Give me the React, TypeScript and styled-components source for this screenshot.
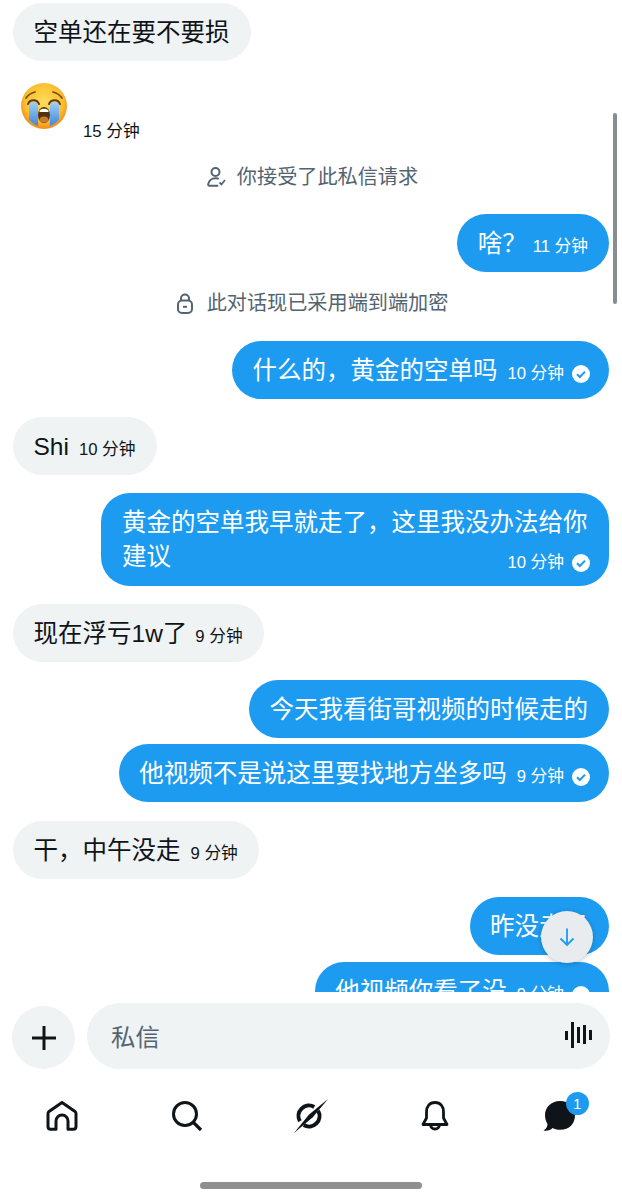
import React from 'react';
import styled, { createGlobalStyle } from 'styled-components';

const GlobalStyle = createGlobalStyle`
  html, body {
    margin: 0;
    padding: 0;
    background: #fff;
  }
  body {
    font-family: "Liberation Sans", "Noto Sans CJK SC", sans-serif;
    color: #0f1419;
  }
`;

const Page = styled.div`
  position: relative;
  width: 622px;
  height: 1200px;
  overflow: hidden;
  display: flex;
  flex-direction: column;
  background: #fff;
`;

const Thread = styled.div`
  height: 992px;
  flex: none;
  overflow: hidden;
  box-sizing: border-box;
  padding: 3px 13px 0;
  display: flex;
  flex-direction: column;
`;

const Row = styled.div<{ $mine?: boolean; $gap?: number }>`
  display: flex;
  flex: none;
  justify-content: ${(p) => (p.$mine ? 'flex-end' : 'flex-start')};
  margin-top: ${(p) => p.$gap ?? 18}px;
`;

const Bubble = styled.div<{ $mine?: boolean; $wrap?: boolean }>`
  display: ${(p) => (p.$wrap ? 'block' : 'flex')};
  align-items: baseline;
  box-sizing: border-box;
  height: ${(p) => (p.$wrap ? '93px' : '58px')};
  width: ${(p) => (p.$wrap ? '508px' : 'auto')};
  padding: ${(p) => (p.$wrap ? '13px 21px 12px 21px' : '2px 21px 0 20.5px')};
  line-height: ${(p) => (p.$wrap ? '34px' : '56px')};
  border-radius: 29px;
  font-size: 24.5px;
  background: ${(p) => (p.$mine ? '#1d9bf0' : '#eff3f4')};
  color: ${(p) => (p.$mine ? '#fff' : '#0f1419')};
`;

const Meta = styled.span<{ $float?: boolean; $gap?: number }>`
  display: inline-flex;
  align-items: center;
  gap: 8px;
  margin-left: ${(p) => p.$gap ?? 10}px;
  font-size: 16.7px;
  line-height: 20px;
  white-space: nowrap;
  ${(p) => (p.$float ? 'float: right; margin-top: 13px;' : '')}
`;

const CheckMark = styled.svg`
  width: 18px;
  height: 18px;
  flex: none;
  margin-right: -2px;
`;

const EmojiRow = styled.div`
  display: flex;
  flex: none;
  align-items: flex-end;
  gap: 16px;
  height: 59px;
  margin-top: 22px;
  padding-left: 8px;
`;

const EmojiFace = styled.svg`
  width: 46px;
  height: 46px;
  margin-bottom: 13px;
`;

const EmojiTime = styled.span`
  font-size: 16.7px;
  line-height: 20px;
`;

const SystemNote = styled.div<{ $gap: number; $after: number; $iconGap: number }>`
  display: flex;
  flex: none;
  align-items: center;
  justify-content: center;
  gap: ${(p) => p.$iconGap}px;
  box-sizing: border-box;
  height: 30px;
  padding: 2px 0 0 3px;
  margin-top: ${(p) => p.$gap}px;
  margin-bottom: ${(p) => p.$after}px;
  font-size: 20.15px;
  line-height: 28px;
  color: #536471;
`;

const Composer = styled.div`
  display: flex;
  align-items: flex-end;
  gap: 12px;
  height: 66px;
  padding: 11px 12px 0;
  flex: none;
`;

const PlusButton = styled.div`
  width: 63px;
  height: 63px;
  flex: none;
  border-radius: 50%;
  background: #eff3f4;
  display: flex;
  align-items: center;
  justify-content: center;
`;

const InputPill = styled.div`
  flex: 1;
  height: 66px;
  box-sizing: border-box;
  padding: 0 18px 2px 24px;
  border-radius: 33px;
  background: #eff3f4;
  display: flex;
  align-items: center;
  justify-content: space-between;
  font-size: 24.4px;
  color: #536471;
`;

const BottomNav = styled.nav`
  display: grid;
  grid-template-columns: repeat(5, 1fr);
  height: 94px;
  flex: none;
`;

const NavItem = styled.div`
  position: relative;
  display: flex;
  align-items: center;
  justify-content: center;
`;

const Badge = styled.span`
  position: absolute;
  left: 68px;
  top: 23px;
  width: 23px;
  height: 23px;
  border-radius: 50%;
  background: #1d9bf0;
  color: #fff;
  font-size: 15px;
  line-height: 23px;
  text-align: center;
`;

const HomeBar = styled.div`
  width: 222px;
  height: 7px;
  margin: 19px auto 0;
  border-radius: 4px;
  background: #8f8f8f;
  flex: none;
`;

const ScrollThumb = styled.div`
  position: absolute;
  left: 613px;
  top: 113px;
  width: 4px;
  height: 191px;
  border-radius: 2px;
  background: #8a8d90;
`;

const JumpButton = styled.div`
  position: absolute;
  left: 541px;
  top: 911px;
  width: 52px;
  height: 52px;
  border-radius: 50%;
  background: #e8ecee;
  box-shadow: 0 1px 5px rgba(15, 20, 25, 0.25);
  display: flex;
  align-items: center;
  justify-content: center;
`;

const Check = () => (
  <CheckMark viewBox="0 0 18 18">
    <circle cx="9" cy="9" r="9" fill="#fff" />
    <path d="M5 9.3l2.8 2.7L13 6.6" fill="none" stroke="#1d9bf0" strokeWidth="2" />
  </CheckMark>
);

const CryingFace = () => (
  <EmojiFace viewBox="0 0 46 46">
    <defs>
      <radialGradient id="faceFill" cx="50%" cy="42%" r="58%">
        <stop offset="0%" stopColor="#ffdc5c" />
        <stop offset="70%" stopColor="#fbc02f" />
        <stop offset="100%" stopColor="#f08a1a" />
      </radialGradient>
      <linearGradient id="tearFill" x1="0" y1="0" x2="0" y2="1">
        <stop offset="0%" stopColor="#9fd0f2" />
        <stop offset="100%" stopColor="#3f86dc" />
      </linearGradient>
    </defs>
    <circle cx="23" cy="23" r="23" fill="url(#faceFill)" />
    <path d="M8 22c1-4 8-4 9 0v21c-3-1-6-3-9-6z" fill="url(#tearFill)" />
    <path d="M29 22c1-4 8-4 9 0v15c-3 3-6 5-9 6z" fill="url(#tearFill)" />
    <path d="M7 21c2-5 9-5 11 0" fill="none" stroke="#5a3a12" strokeWidth="2" strokeLinecap="round" />
    <path d="M28 21c2-5 9-5 11 0" fill="none" stroke="#5a3a12" strokeWidth="2" strokeLinecap="round" />
    <path d="M5 15c2-3 5-5 9-6" fill="none" stroke="#7a4f14" strokeWidth="1.8" strokeLinecap="round" />
    <path d="M41 15c-2-3-5-5-9-6" fill="none" stroke="#7a4f14" strokeWidth="1.8" strokeLinecap="round" />
    <ellipse cx="23" cy="32" rx="6" ry="8" fill="#55320f" />
    <path d="M18.500 27.500c2-2.500 7-2.500 9 0v1.500h-9z" fill="#fff" />
    <ellipse cx="23" cy="36.500" rx="4.200" ry="3" fill="#c77b2e" />
  </EmojiFace>
);

const PersonCheckIcon = () => (
  <svg width="19" height="20" viewBox="0 0 19 20" fill="none" stroke="#536471" strokeWidth="2">
    <circle cx="8.500" cy="5" r="4" />
    <path d="M11 11.500c-.8-.2-1.600-.3-2.500-.3-4 0-6.800 2.600-7.300 6-.1.900.4 1.500 1.300 1.500h8" strokeLinecap="round" />
    <path d="M12.500 15.500l2 2 3.500-4.500" strokeWidth="1.800" />
  </svg>
);

const LockIcon = () => (
  <svg width="16" height="21" viewBox="0 0 16 21" fill="none" stroke="#536471" strokeWidth="2">
    <path d="M4 8V5.500a4 4 0 0 1 8 0V8" />
    <rect x="1" y="7.500" width="14" height="12.500" rx="4" />
    <path d="M6 13.800h4" />
  </svg>
);

const WaveIcon = () => (
  <svg width="27" height="26" viewBox="0 0 27 26" fill="#0f1419">
    <rect x="0" y="9" width="3" height="9" />
    <rect x="6" y="0" width="3" height="26" />
    <rect x="12" y="5" width="3" height="16" />
    <rect x="18" y="3" width="3" height="19" />
    <rect x="24" y="8" width="3" height="10" />
  </svg>
);

const icon = { fill: 'none', stroke: '#0f1419', strokeWidth: 3 };

const HomeIcon = () => (
  <svg width="32" height="32" viewBox="0 0 32 32" {...icon} strokeLinejoin="round">
    <path d="M16 2.500L29 11.500c.7.500 1 1.200 1 2v13c0 1.700-1 2.700-2.700 2.700H22V21a6 6 0 0 0-12 0v8.200H4.700C3 29.200 2 28.200 2 26.500v-13c0-.8.300-1.500 1-2z" />
  </svg>
);

const SearchIcon = () => (
  <svg width="32" height="32" viewBox="0 0 32 32" {...icon}>
    <circle cx="14" cy="14" r="11.500" />
    <path d="M22.500 22.500L30 30" strokeWidth="3.200" />
  </svg>
);

const GrokIcon = () => (
  <svg width="38" height="38" viewBox="0 0 38 38" fill="none">
    <path d="M22.250 9.900A10.500 10.500 0 0 0 7.900 24.250" stroke="#0f1419" strokeWidth="4" />
    <path d="M11.750 28.090A10.500 10.500 0 0 0 26.090 13.750" stroke="#0f1419" strokeWidth="4" />
    <path d="M36 2L20.800 20.300 2 36 16.800 17.800z" fill="#0f1419" />
  </svg>
);

const BellIcon = () => (
  <svg width="30" height="32" viewBox="0 0 30 32" {...icon} strokeLinejoin="round">
    <path d="M15 2.500c-5.500 0-8.500 4-8.500 9.500v6L3 24.500h24L23.500 18v-6c0-5.500-3-9.500-8.500-9.500z" strokeWidth="2.800" />
    <path d="M10.500 24.500c0 2.700 2 4.500 4.500 4.500s4.500-1.800 4.500-4.500" strokeWidth="2.800" />
  </svg>
);

const ChatIcon = () => (
  <svg width="34" height="32" viewBox="0 0 34 32" fill="#0f1419">
    <path d="M17 1C8 1 2 7.500 2 15c0 3.500 1 6.500 2.500 9C4.500 26.500 3 29 .5 30.500c3.500.8 7-.2 9-2.500 2 1 4.500 1.800 7.500 1.800 9.500 0 15-6 15-14.500C32 7 26 1 17 1z" />
  </svg>
);

const App: React.FC = () => (
  <Page>
    <GlobalStyle />
    <Thread>
      <Row $gap={0}>
        <Bubble>空单还在要不要损</Bubble>
      </Row>
      <EmojiRow>
        <CryingFace />
        <EmojiTime>15 分钟</EmojiTime>
      </EmojiRow>
      <SystemNote $gap={19} $after={5} $iconGap={11}>
        <PersonCheckIcon />
        你接受了此私信请求
      </SystemNote>
      <Row $mine $gap={18}>
        <Bubble $mine>
          啥&#xFF1F;<Meta $gap={6}>11 分钟</Meta>
        </Bubble>
      </Row>
      <SystemNote $gap={15} $after={6} $iconGap={14}>
        <LockIcon />
        此对话现已采用端到端加密
      </SystemNote>
      <Row $mine>
        <Bubble $mine>
          什么的&#xFF0C;黄金的空单吗<Meta>10 分钟<Check /></Meta>
        </Bubble>
      </Row>
      <Row>
        <Bubble>
          Shi<Meta>10 分钟</Meta>
        </Bubble>
      </Row>
      <Row $mine>
        <Bubble $mine $wrap>
          黄金的空单我早就走了&#xFF0C;这里我没办法给你建议
          <Meta $float>10 分钟<Check /></Meta>
        </Bubble>
      </Row>
      <Row>
        <Bubble>
          现在浮亏1w了<Meta $gap={8}>9 分钟</Meta>
        </Bubble>
      </Row>
      <Row $mine>
        <Bubble $mine>今天我看街哥视频的时候走的</Bubble>
      </Row>
      <Row $mine $gap={6}>
        <Bubble $mine>
          他视频不是说这里要找地方坐多吗<Meta>9 分钟<Check /></Meta>
        </Bubble>
      </Row>
      <Row $gap={19}>
        <Bubble>
          干&#xFF0C;中午没走<Meta>9 分钟</Meta>
        </Bubble>
      </Row>
      <Row $mine>
        <Bubble $mine>昨没走吗</Bubble>
      </Row>
      <Row $mine $gap={7}>
        <Bubble $mine>
          他视频你看了没<Meta>9 分钟<Check /></Meta>
        </Bubble>
      </Row>
    </Thread>
    <Composer>
      <PlusButton>
        <svg width="26" height="26" viewBox="0 0 26 26" stroke="#0f1419" strokeWidth="3">
          <path d="M13 1v24M1 13h24" />
        </svg>
      </PlusButton>
      <InputPill>
        私信
        <WaveIcon />
      </InputPill>
    </Composer>
    <BottomNav>
      <NavItem><HomeIcon /></NavItem>
      <NavItem><SearchIcon /></NavItem>
      <NavItem><GrokIcon /></NavItem>
      <NavItem><BellIcon /></NavItem>
      <NavItem>
        <ChatIcon />
        <Badge>1</Badge>
      </NavItem>
    </BottomNav>
    <HomeBar />
    <ScrollThumb />
    <JumpButton>
      <svg width="18" height="20" viewBox="0 0 18 20" fill="none" stroke="#1d9bf0" strokeWidth="1.800">
        <path d="M9 1.500v16M2.500 11.500L9 18l6.500-6.500" />
      </svg>
    </JumpButton>
  </Page>
);

export default App;
